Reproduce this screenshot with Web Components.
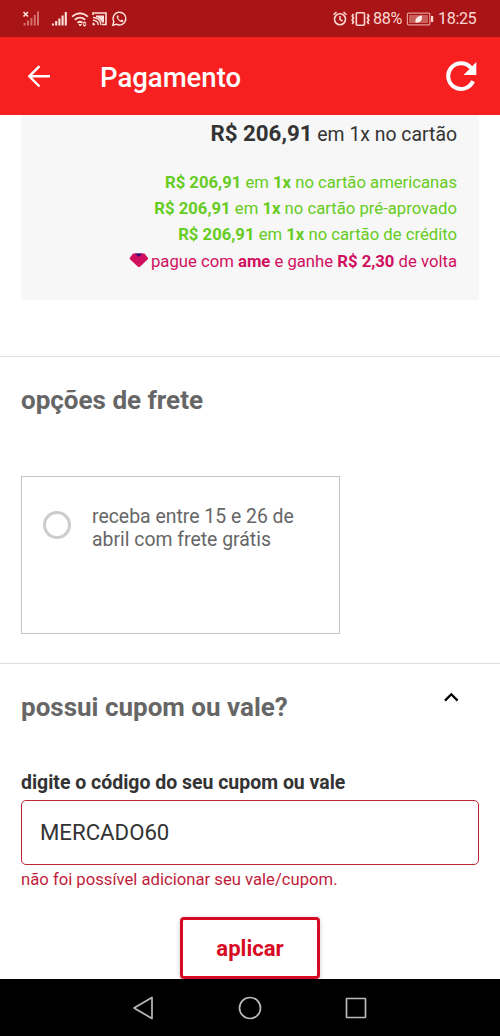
<!DOCTYPE html>
<html lang="pt-BR">
<head>
<meta charset="utf-8">
<meta name="viewport" content="width=device-width, initial-scale=1">
<title>Pagamento</title>
<style>
html, body { margin: 0; height: 100%; }
body { font-family: Roboto, "Noto Sans", sans-serif; background: #fff; color: #333; overflow: hidden; }
</style>
</head>
<body>
<payment-screen></payment-screen>
<script>
function define(name, html) {
  const template = document.createElement('template');
  template.innerHTML = '<style>*{box-sizing:border-box}svg{display:block;flex:none}</style>' + html;
  customElements.define(name, class extends HTMLElement {
    constructor() {
      super();
      this.attachShadow({ mode: 'open' }).append(template.content.cloneNode(true));
    }
  });
}

define('status-bar', `
<style>
:host { display: flex; align-items: center; justify-content: space-between; box-sizing: border-box; height: 37px; padding: 0 23px 0 22px; background: #a91416; color: #fbd9d2; font-size: 16.200px; letter-spacing: -.4px; line-height: 20px; }
div { display: flex; align-items: center; height: 20px; }
</style>
<div>
  <svg width="106" height="20" viewBox="0 0 106 20" fill="none" stroke="#fbe0da">
    <g stroke="#d4706d" stroke-width="2"><path d="M2.6 16.5v-2.5M6 16.5v-5M9.4 16.5V9M12.8 16.5V6M16 16.5V2.5"/></g>
    <path d="M1.5 3l4.5 4.5M6 3L1.5 7.500" stroke-width="1.7"/>
    <path d="M31 16.500v-2M34.200 16.500v-4.500M37.400 16.500V9.500M40.600 16.500V6.500M43.800 16.500V3" stroke-width="2.100"/>
    <path d="M50 7.600Q58 .800 66 7.600M52.800 10.800Q58 6.400 63.200 10.800M55.500 13.800Q58 11.800 60.500 13.800" stroke-width="1.800"/>
    <path d="M57 15.500l1.200 1.500 1.200-1.500z" fill="#fbe0da"/><path d="M61 14.500l1.500-1.500 1.500 1.500M61 15.500l1.500 1.500 1.500-1.500" stroke-width="1.200"/>
    <path d="M71 6V4h13v11.500h-4" stroke-width="1.600"/><path d="M74 6.500h8v7h-2q-2-5-6-5.500z" fill="#fbe0da" stroke="none"/>
    <path d="M71 8.500q7.500 0 8 7.500M71 11.300q5 .200 5.200 4.700" stroke-width="1.400"/><path d="M70.500 13.500q2.500 0 2.700 2.800h-2.700z" fill="#fbe0da" stroke="none"/>
    <path d="M90.800 16.200l1-3.600a6.400 6.400 0 1 1 2.600 2.600z" stroke-width="1.500"/>
    <path d="M95.400 6.300q-1.300 1.200-.3 3.200 1.600 2.900 4.600 3.700 1.500 0 1.900-1.700l-1.900-1-1 1q-1.900-.800-2.700-2.500l.8-.9-.7-1.800z" fill="#fbe0da" stroke="none"/>
  </svg>
</div>
<div>
  <svg width="41" height="20" viewBox="0 0 41 20" fill="none" stroke="#fbd9d2">
    <circle cx="8" cy="10.200" r="5.500" stroke-width="1.600"/><path d="M8 7v3.500l2.600 1.600M1.500 5.700l3-2.600M14.500 5.700l-3-2.600" stroke-width="1.500"/>
    <rect x="24.300" y="3.800" width="8.200" height="12.400" rx="1" stroke-width="1.600"/>
    <path d="M21.500 5l-1.300 2 1.300 2-1.300 2 1.300 2-1.300 2M35.500 5l1.300 2-1.300 2 1.300 2-1.300 2 1.300 2" stroke-width="1.700"/>
  </svg>
  <span style="width:32px">88%</span>
  <svg width="35" height="20" viewBox="0 0 35 20" style="margin-right:-2px">
    <rect x="2.400" y="4.100" width="22.400" height="11.800" rx="1" fill="none" stroke="#e59a94" stroke-width="1.200"/><rect x="4" y="6" width="19" height="8" fill="#c95e5a"/>
    <path d="M10.500 13.500q-1-6 6.500-7 .500 8-6.500 7z" fill="#fff0eb"/><rect x="26" y="7" width="2.200" height="6" fill="#fbd9d2"/>
  </svg>
  <span style="white-space:nowrap;width:39px">18:25</span>
</div>`);

define('app-header', `
<style>
:host { display: flex; align-items: center; box-sizing: border-box; height: 78px; padding: 0 23px 0 27px; background: #f71f20; color: #fff; }
h1 { margin: 0 0 0 49px; flex: 1; font-size: 27.500px; font-weight: 500; line-height: 36px; padding-top: 3px; }
</style>
<svg width="24" height="24" viewBox="0 0 24 24" fill="none" stroke="#fff" stroke-width="2.400"><path d="M23 12.300H2M12.500 2.100L2.300 12.300l10.200 10.200"/></svg>
<h1><slot></slot></h1>
<svg width="31" height="32" viewBox="0 0 31 32"><path d="M27 21.100A12.900 12.900 0 1 1 25 7.800" fill="none" stroke="#fff" stroke-width="4"/><path d="M30.300 2v13H17.500z" fill="#fff"/></svg>`);

define('price-summary', `
<style>
:host { display: block; box-sizing: border-box; height: 185px; margin: 0 21px; padding: 4px 22px 0 0; background: #f7f7f7; text-align: right; white-space: nowrap; }
.total { font-size: 19.400px; line-height: 28px; color: #333; margin-bottom: 21px; }
.total b { font-size: 22.300px; }
.green, .ame { font-size: 16.680px; line-height: 26.200px; }
.green { color: #6c2; }
.ame { color: #d0105f; display: flex; justify-content: flex-end; align-items: center; gap: 2px; }
.ame svg { margin-top: -3px; }
b { font-weight: 700; }
</style>
<div class="total"><b>R$ 206,91</b> em 1x no cartão</div>
<div class="green"><b>R$ 206,91</b> em <b>1x</b> no cartão americanas</div>
<div class="green"><b>R$ 206,91</b> em <b>1x</b> no cartão pré-aprovado</div>
<div class="green"><b>R$ 206,91</b> em <b>1x</b> no cartão de crédito</div>
<div class="ame"><svg width="20" height="15" viewBox="0 0 20 15"><path d="M4 .500h11.500l3.500 4.500q.300.600-.200 1.200l-7.500 7.300q-1.300 1.200-2.600 0L1 6.200Q.300 5.600.700 5z" fill="#d0105f"/><path d="M6 .500h7.500L9.700 4z" fill="#34117c"/></svg><span>pague com <b>ame</b> e ganhe <b>R$ 2,30</b> de volta</span></div>`);

define('page-section', `
<style>
:host { display: block; box-sizing: border-box; border-top: 1px solid #dedede; padding: 0 21px; }
header { display: flex; justify-content: space-between; }
h2 { margin: 27px 0 0; font-size: 26px; line-height: 32px; font-weight: 700; color: #666; white-space: nowrap; }
</style>
<header><h2><slot name="title"></slot></h2><slot name="action"></slot></header>
<slot></slot>`);

define('chevron-up', `
<style>:host { display: block; padding: 27px 20px 0 0; }</style>
<svg width="16" height="12" viewBox="0 0 16 12"><path d="M2 9.600L8.300 3.300l6.300 6.300" fill="none" stroke="#000" stroke-width="2.300"/></svg>`);

define('shipping-option', `
<style>
:host { display: flex; box-sizing: border-box; width: 319px; height: 158px; margin-top: 60px; border: 1px solid #c4c4c4; padding: 28px 20px 0 21px; gap: 21px; color: #666; font-size: 19.420px; line-height: 23px; }
i { flex: none; width: 28px; height: 28px; margin-top: 6px; border: 3px solid #ccc; border-radius: 50%; }
span { white-space: nowrap; }
</style>
<i></i><span><slot></slot></span>`);

define('coupon-form', `
<style>
:host { display: flex; flex-direction: column; margin-top: 47px; }
label { font-size: 19.470px; line-height: 26px; font-weight: 700; color: #333; white-space: nowrap; }
.field { display: flex; align-items: center; height: 65px; margin-top: 4px; padding: 0 18px 2px; border: 1.500px solid #bb2735; border-radius: 5px; font-size: 22.200px; color: #333; }
.error { margin-top: 5px; font-size: 16.670px; line-height: 20px; color: #bf1d3c; white-space: nowrap; }
button { align-self: center; width: 140px; height: 62px; margin-top: 27px; padding: 0; border: 3px solid #d70a24; border-radius: 4px; background: #fff; box-shadow: 0 1px 5px #0003; color: #d70a24; font: 700 22.100px Roboto, sans-serif; }
</style>
<label>digite o código do seu cupom ou vale</label>
<div class="field">MERCADO60</div>
<div class="error">não foi possível adicionar seu vale/cupom.</div>
<button>aplicar</button>`);

define('navigation-bar', `
<style>:host { display: flex; align-items: center; justify-content: center; gap: 82px; height: 57px; background: #000; }</style>
<svg width="24" height="26" viewBox="0 0 24 26"><path d="M20 2.500v21L2 13z" fill="none" stroke="#bbb" stroke-width="1.700" stroke-linejoin="round"/></svg>
<svg width="24" height="26" viewBox="0 0 24 26"><circle cx="12" cy="13" r="10.500" fill="none" stroke="#bbb" stroke-width="1.700"/></svg>
<svg width="24" height="26" viewBox="0 0 24 26"><rect x="2.500" y="3.500" width="19" height="19" rx=".5" fill="none" stroke="#bbb" stroke-width="1.700"/></svg>`);

define('payment-screen', `
<style>
:host { display: flex; flex-direction: column; width: 500px; height: 1036px; background: #fff; }
main { height: 864px; overflow: hidden; flex: none; }
.shipping { margin-top: 56px; height: 307px; }
</style>
<status-bar></status-bar>
<app-header>Pagamento</app-header>
<main>
  <price-summary></price-summary>
  <page-section class="shipping"><span slot="title">opções de frete</span>
    <shipping-option>receba entre 15 e 26 de<br>abril com frete grátis</shipping-option>
  </page-section>
  <page-section><span slot="title">possui cupom ou vale?</span><chevron-up slot="action"></chevron-up>
    <coupon-form></coupon-form>
  </page-section>
</main>
<navigation-bar></navigation-bar>`);
</script>
</body>
</html>
